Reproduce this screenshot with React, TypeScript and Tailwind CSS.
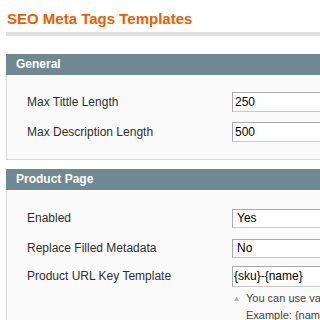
import React from 'react';

function Field({ value, pad = 'pl-[2px]', h = 'h-[20px]' }: { value: string; pad?: string; h?: string }) {
  return (
    <div
      className={`w-[300px] ${h} ${pad} flex items-center border border-[#aaaaaa] border-r-[#c8c8c8] border-b-[#c8c8c8] bg-white text-[12px] text-black`}
    >
      {value}
    </div>
  );
}

function Row({ label, children, h = 'h-[30px]' }: { label: string; children: React.ReactNode; h?: string }) {
  return (
    <div className={`flex items-center ${h}`}>
      <div className="w-[205px] shrink-0">{label}</div>
      {children}
    </div>
  );
}

export default function App() {
  return (
    <div className="w-[320px] h-[320px] overflow-hidden bg-white font-['Liberation_Sans',Arial,sans-serif] text-[12px] text-[#2f2f2f]">
      <div className="w-[420px] pl-[6px]">
        {/* Page title */}
        <div className="pt-[10px] pb-[4px] border-b-4 border-[#dfdfdf]">
          <h3 className="pl-[1px] text-[15px] leading-[18px] font-bold text-[#eb5e00]">SEO Meta Tags Templates</h3>
        </div>

        {/* General */}
        <div className="mt-[18px]">
          <div className="h-[21px] leading-[21px] px-[10px] bg-[#6f8992] text-white font-bold">General</div>
          <div className="pt-[12px] pb-[12px] pl-[20px] bg-[#fafafa] border border-t-0 border-[#d6d6d6]">
            <Row label="Max Tittle Length">
              <Field value="250" />
            </Row>
            <Row label="Max Description Length">
              <Field value="500" />
            </Row>
          </div>
        </div>

        {/* Product Page */}
        <div className="mt-[9px]">
          <div className="h-[21px] leading-[21px] px-[10px] bg-[#6f8992] text-white font-bold">Product Page</div>
          <div className="pt-[13px] pl-[20px] bg-[#fafafa] border border-t-0 border-[#d6d6d6] h-[200px]">
            <Row label="Enabled">
              <Field value="Yes" pad="pl-[4px]" h="h-[19px]" />
            </Row>
            <Row label="Replace Filled Metadata">
              <Field value="No" pad="pl-[4px]" h="h-[19px]" />
            </Row>
            <Row label="Product URL Key Template" h="h-[26px]">
              <Field value="{sku}-{name}" pad="pl-[1px]" h="h-[21px]" />
            </Row>
            <div className="flex mt-[1px]">
              <div className="w-[205px] shrink-0" />
              <div className="text-[11px] leading-[17px] text-[#444444]">
                <div className="flex items-center">
                  <svg width="14" height="17" viewBox="0 0 14 17" className="shrink-0">
                    <polygon points="2,11 4.5,6.5 7,11" fill="#b0b0b0" />
                  </svg>
                  <span className="whitespace-nowrap">You can use variables: {'{sku}'}, {'{name}'}</span>
                </div>
                <div className="pl-[14px] whitespace-nowrap">Example: {'{name}'}-{'{sku}'}</div>
              </div>
            </div>
          </div>
        </div>
      </div>
    </div>
  );
}
